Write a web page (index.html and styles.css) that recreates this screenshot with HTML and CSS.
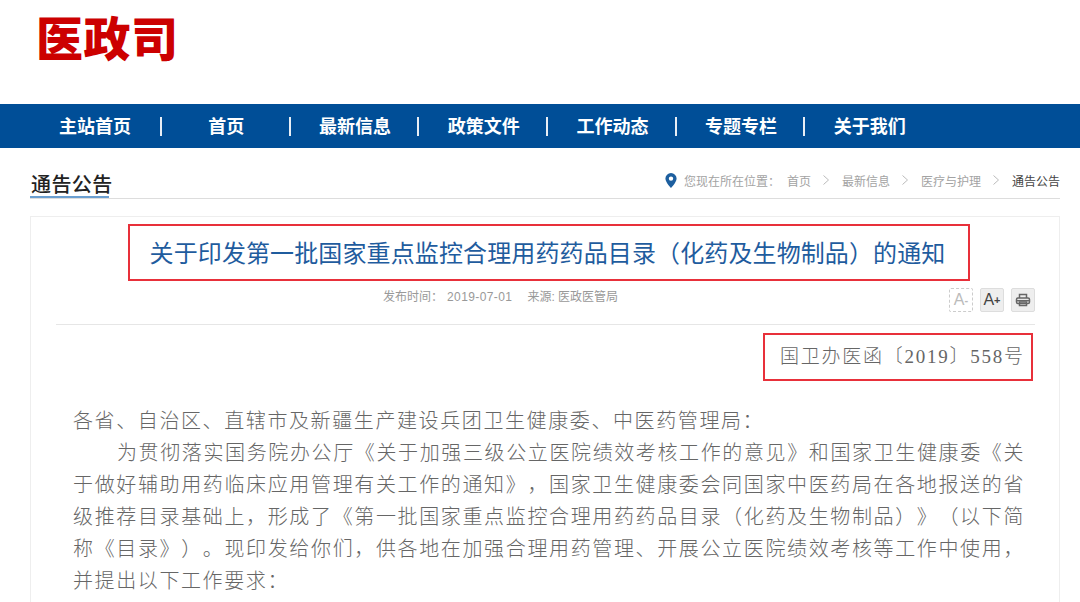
FILE: index.html
```html
<!DOCTYPE html>
<html lang="zh-CN">
<head>
    <meta charset="UTF-8">
    <title>医政司</title>
    <link rel="stylesheet" href="styles.css">
</head>
<body>
    <div class="logo">医政司</div>
    <div class="nav">
        <a class="nav-item">主站首页</a>
        <a class="nav-item">首页</a>
        <a class="nav-item">最新信息</a>
        <a class="nav-item">政策文件</a>
        <a class="nav-item">工作动态</a>
        <a class="nav-item">专题专栏</a>
        <a class="nav-item last">关于我们</a>
    </div>
    <div class="main">
        <div class="crumb-bar">
            <h2 class="section-title">通告公告</h2>
            <div class="crumbs">
                <svg class="pin" width="12" height="15" viewBox="0 0 12 15">
                    <path fill="#1d5f9f" fill-rule="evenodd" d="M6 0a5.600 5.600 0 0 1 5.600 5.600C11.600 9.400 6 15 6 15S.4 9.400.4 5.600A5.600 5.600 0 0 1 6 0zm0 3.400a2.200 2.200 0 1 0 0 4.400 2.200 2.200 0 0 0 0-4.400z"/>
                </svg>
                <span class="crumb-label">您现在所在位置：</span>
                <span>首页</span>
                <svg class="chev" width="6" height="10" viewBox="0 0 6 10" fill="none" stroke="#bbb"><path d="M.5.5 5.500 5 .5 9.500"/></svg>
                <span>最新信息</span>
                <svg class="chev" width="6" height="10" viewBox="0 0 6 10" fill="none" stroke="#bbb"><path d="M.5.5 5.500 5 .5 9.500"/></svg>
                <span>医疗与护理</span>
                <svg class="chev" width="6" height="10" viewBox="0 0 6 10" fill="none" stroke="#bbb"><path d="M.5.5 5.500 5 .5 9.500"/></svg>
                <span class="current">通告公告</span>
            </div>
        </div>
        <div class="card">
            <div class="title-box"><h1>关于印发第一批国家重点监控合理用药药品目录（化药及生物制品）的通知</h1></div>
            <div class="meta-row">
                <div class="meta">发布时间：<span class="date">2019-07-01</span>来源: 医政医管局</div>
                <div class="tools">
                    <span class="tool off">A<sup>-</sup></span>
                    <span class="tool">A<sup>+</sup></span>
                    <span class="tool">
                        <svg width="16" height="16" viewBox="0 0 16 16" fill="none" stroke="#666" stroke-width="1.500">
                            <path d="M4.500 6V2.500h7V6"/>
                            <rect x="1.500" y="6" width="13" height="5.500" rx="1.500"/>
                            <path d="M4.500 10v3.500h7V10z"/>
                            <path d="M1.500 8.700h13"/>
                        </svg>
                    </span>
                </div>
            </div>
            <div class="doc-row"><div class="doc-no">国卫办医函〔2019〕558号</div></div>
            <div class="content">
                <p>各省、自治区、直辖市及新疆生产建设兵团卫生健康委、中医药管理局：</p>
                <p class="indent">为贯彻落实国务院办公厅《关于加强三级公立医院绩效考核工作的意见》和国家卫生健康委《关于做好辅助用药临床应用管理有关工作的通知》，国家卫生健康委会同国家中医药局在各地报送的省级推荐目录基础上，形成了《第一批国家重点监控合理用药药品目录（化药及生物制品）》（以下简称《目录》）。现印发给你们，供各地在加强合理用药管理、开展公立医院绩效考核等工作中使用，并提出以下工作要求：</p>
            </div>
        </div>
    </div>
</body>
</html>
```

FILE: styles.css
```css
html, body {
    height: 602px;
    overflow: hidden;
}

body {
    margin: 0;
    background-color: #fff;
    font-family: "Liberation Sans", "Noto Sans CJK SC", sans-serif;
    color: #666;
    text-spacing-trim: space-all;
}

.logo {
    height: 104px;
    padding-left: 36px;
    box-sizing: border-box;
    font-size: 47px;
    font-weight: 900;
    letter-spacing: 0.500px;
    line-height: 80px;
    color: #cc0000;
}

.nav {
    display: flex;
    height: 44px;
    padding-left: 28px;
    background-color: #004e97;
}

.nav-item {
    position: relative;
    width: 128.700px;
    font-size: 18px;
    font-weight: 700;
    line-height: 46px;
    text-align: center;
    color: #fff;
}

.nav-item:first-child {
    width: 134px;
}

.nav-item::after {
    content: "";
    position: absolute;
    right: 0;
    top: 13px;
    width: 2px;
    height: 19px;
    background-color: #e8eef5;
}

.nav-item.last::after {
    display: none;
}

.main {
    padding: 0 20px 0 30px;
}

.crumb-bar {
    display: flex;
    justify-content: space-between;
    height: 51px;
    border-bottom: 1px solid #ddd;
    box-sizing: border-box;
}

.section-title {
    width: 79px;
    height: 50px;
    margin: 0;
    box-sizing: border-box;
    padding: 28px 0 0 1px;
    font-size: 20px;
    font-weight: 500;
    letter-spacing: 0.400px;
    line-height: 18px;
    white-space: nowrap;
    color: #222;
    border-bottom: 2px solid #6b9fd0;
}

.crumbs {
    display: flex;
    align-items: center;
    height: 20px;
    margin-top: 22px;
    font-size: 12px;
    color: #a3a3a3;
}

.chev {
    margin: 0 12.500px;
}

.pin {
    margin-right: 7px;
}

.crumb-label {
    margin-right: 7px;
}

.current {
    color: #444;
}

.card {
    position: relative;
    height: 400px;
    margin-top: 17px;
    border: 1px solid #eee;
    box-sizing: border-box;
}

.title-box {
    width: 842px;
    height: 57px;
    margin: 7px 0 0 97px;
    box-sizing: border-box;
    border: 2px solid #e8303a;
    text-align: center;
}

.title-box h1 {
    margin: 0 0 0 -3px;
    font-size: 24px;
    font-weight: 400;
    letter-spacing: 0.120px;
    line-height: 55px;
    color: #1f5c9e;
}

.meta-row {
    display: flex;
    justify-content: space-between;
    height: 43px;
    margin: 0 24px 0 25px;
    border-bottom: 1px solid #e6e6e6;
}

.meta {
    margin: 8px 0 0 327px;
    font-size: 12px;
    line-height: 16px;
    color: #999;
}

.date {
    margin: 0 15px 0 4px;
    letter-spacing: 0.400px;
}

.tools {
    display: flex;
    gap: 7px;
    margin: 7px 0 0 0;
}

.tool {
    display: flex;
    align-items: center;
    justify-content: center;
    width: 24px;
    height: 24px;
    box-sizing: border-box;
    background-color: #eee;
    border: 1px solid #ddd;
    border-radius: 2px;
    font-size: 16px;
    color: #444;
}

.tool sup {
    font-size: 11px;
    line-height: 0;
    font-weight: 700;
}

.tool.off {
    background-color: #fff;
    border: 1px dashed #ccc;
    color: #bbb;
}

.doc-row {
    display: flex;
    justify-content: flex-end;
    margin: 8px 26px 0 0;
}

.doc-no {
    width: 270px;
    height: 48px;
    box-sizing: border-box;
    padding-left: 15px;
    border: 2px solid #e8303a;
    font-family: "Liberation Serif", "Noto Sans CJK SC", serif;
    font-size: 19px;
    font-weight: 300;
    letter-spacing: 1.750px;
    line-height: 44px;
    white-space: nowrap;
    color: #666;
}

.content {
    margin: 24px 34px 0 42px;
    font-family: "Liberation Serif", "Noto Sans CJK SC", serif;
    font-size: 20px;
    font-weight: 300;
    letter-spacing: 1.600px;
    line-height: 32px;
    color: #666;
    text-align: justify;
}

.content p {
    margin: 0;
}

.content .indent {
    text-indent: 2.200em;
}
```
